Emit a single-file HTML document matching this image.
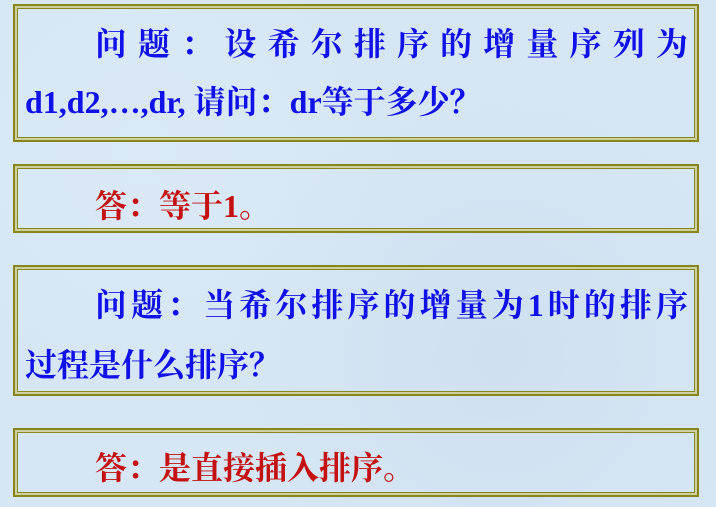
<!DOCTYPE html>
<html><head><meta charset="utf-8"><style>
html,body{margin:0;padding:0}
body{width:716px;height:507px;overflow:hidden;position:relative;
background:#d6e6f4;
background-image:radial-gradient(circle at 20% 30%,#dbe9f6 0,transparent 40%),radial-gradient(circle at 70% 70%,#cfe0f1 0,transparent 45%);
font-family:"Liberation Serif","Noto Serif CJK SC",serif;font-weight:bold;font-size:32px}
.box{position:absolute;left:13px;width:686px;border:2px solid #86861c;box-shadow:inset 0 0 0 2px #cfd0a0,inset 0 0 0 3px #86861c;box-sizing:border-box}
.ln{position:absolute;white-space:nowrap;line-height:36px}
.j{display:flex;justify-content:space-between}
.b{color:#1010e8}.r{color:#c41010}
</style></head><body>
<div class="box" style="top:4px;height:138px"></div>
<div class="box" style="top:164px;height:69px"></div>
<div class="box" style="top:265px;height:131px"></div>
<div class="box" style="top:428px;height:69px"></div>

<div class="ln b j" style="left:95px;width:593px;top:26px"><span>问</span><span>题</span><span>：</span><span>设</span><span>希</span><span>尔</span><span>排</span><span>序</span><span>的</span><span>增</span><span>量</span><span>序</span><span>列</span><span>为</span></div>
<div class="ln b" style="left:25px;top:84px">d1,d2,…,dr, 请问：dr等于多少？</div>

<div class="ln r" style="left:95px;top:188px">答：等于1。</div>

<div class="ln b j" style="left:95px;width:593px;top:287px"><span>问</span><span>题</span><span>：</span><span>当</span><span>希</span><span>尔</span><span>排</span><span>序</span><span>的</span><span>增</span><span>量</span><span>为</span><span>1</span><span>时</span><span>的</span><span>排</span><span>序</span></div>
<div class="ln b" style="left:25px;top:347px">过程是什么排序？</div>

<div class="ln r" style="left:95px;top:450px">答：是直接插入排序。</div>
</body></html>
